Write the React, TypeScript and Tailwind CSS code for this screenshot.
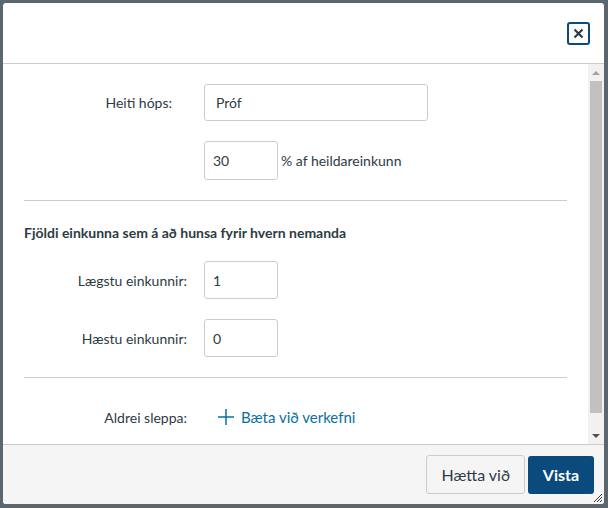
export default function App() {
  return (
    <div className="w-[608px] h-[508px] bg-[#5b666f] p-[3px] font-[Lato,sans-serif]" style={{ fontFamily: "Lato, sans-serif" }}>
      <div className="relative w-[601px] h-[501px] bg-white rounded-[3px] flex flex-col overflow-hidden">
        <div className="h-[61px] border-b border-[#c7cdd1] flex items-center justify-end pr-[14px] shrink-0">
          <button className="w-[23px] h-[23px] border-2 border-[#0b4a7d] rounded-[3px] flex items-center justify-center">
            <svg width="11" height="11" viewBox="0 0 11 11"><path d="M1.5 1.5l8 8M9.5 1.5l-8 8" stroke="#2d3b45" strokeWidth="2.2" /></svg>
          </button>
        </div>
        <div className="flex flex-1 min-h-0">
          <div className="flex-1 pl-[21px] pr-[21px] text-[14px] text-[#2d3b45]">
            <div className="flex items-center mt-[20px]">
              <span className="w-[148px] text-right">Heiti hóps:</span>
              <div className="ml-[32px] w-[224px] h-[37px] border border-[#c7cdd1] rounded-[3px] px-[11px] flex items-center">Próf</div>
            </div>
            <div className="flex items-center mt-[20px] ml-[180px]">
              <div className="w-[74px] h-[39px] border border-[#c7cdd1] rounded-[3px] px-[8px] flex items-center">30</div>
              <span className="ml-[3px]">% af heildareinkunn</span>
            </div>
            <div className="border-t border-[#c7cdd1] mt-[20px]" />
            <div className="mt-[21px] font-bold">Fjöldi einkunna sem á að hunsa fyrir hvern nemanda</div>
            <div className="flex items-center mt-[18px]">
              <span className="w-[163px] text-right">Lægstu einkunnir:</span>
              <div className="ml-[17px] w-[74px] h-[38px] border border-[#c7cdd1] rounded-[3px] px-[8px] flex items-center">1</div>
            </div>
            <div className="flex items-center mt-[20px]">
              <span className="w-[163px] text-right">Hæstu einkunnir:</span>
              <div className="ml-[17px] w-[74px] h-[38px] border border-[#c7cdd1] rounded-[3px] px-[8px] flex items-center">0</div>
            </div>
            <div className="border-t border-[#c7cdd1] mt-[20px]" />
            <div className="flex items-center mt-[28px]">
              <span className="w-[163px] text-right">Aldrei sleppa:</span>
              <span className="ml-[31px] flex items-center text-[#0770a3] text-[15px]">
                <svg width="16" height="16" viewBox="0 0 16 16" className="mr-[7px]"><path d="M8 0v16M0 8h16" stroke="#0770a3" strokeWidth="1.5" /></svg>
                Bæta við verkefni
              </span>
            </div>
          </div>
          <div className="w-[16px] bg-[#f1f1f1] flex flex-col items-center">
            <div className="h-[17px] flex items-center"><div className="w-0 h-0 border-x-[4px] border-x-transparent border-b-[4px] border-b-[#a3a3a3]" /></div>
            <div className="w-[12px] h-[332px] bg-[#c1c1c1]" />
            <div className="flex-1" />
            <div className="h-[17px] flex items-center"><div className="w-0 h-0 border-x-[4px] border-x-transparent border-t-[4px] border-t-[#505050]" /></div>
          </div>
        </div>
        <div className="h-[60px] bg-[#f5f5f5] border-t border-[#c7cdd1] flex items-center justify-end gap-[3px] pr-[10px] shrink-0">
          <button className="h-[39px] px-[14px] bg-[#f5f5f5] border border-[#c7cdd1] rounded-[3px] text-[16px] text-[#2d3b45]">Hætta við</button>
          <button className="h-[38px] w-[66px] bg-[#0b4a7d] rounded-[3px] text-[16px] font-bold text-white">Vista</button>
        </div>
        <svg className="absolute right-[2px] bottom-[2px]" width="10" height="10" viewBox="0 0 10 10"><path d="M10 2L2 10M10 5L5 10M10 8L8 10" stroke="#333" strokeWidth="1" /></svg>
      </div>
    </div>
  );
}
